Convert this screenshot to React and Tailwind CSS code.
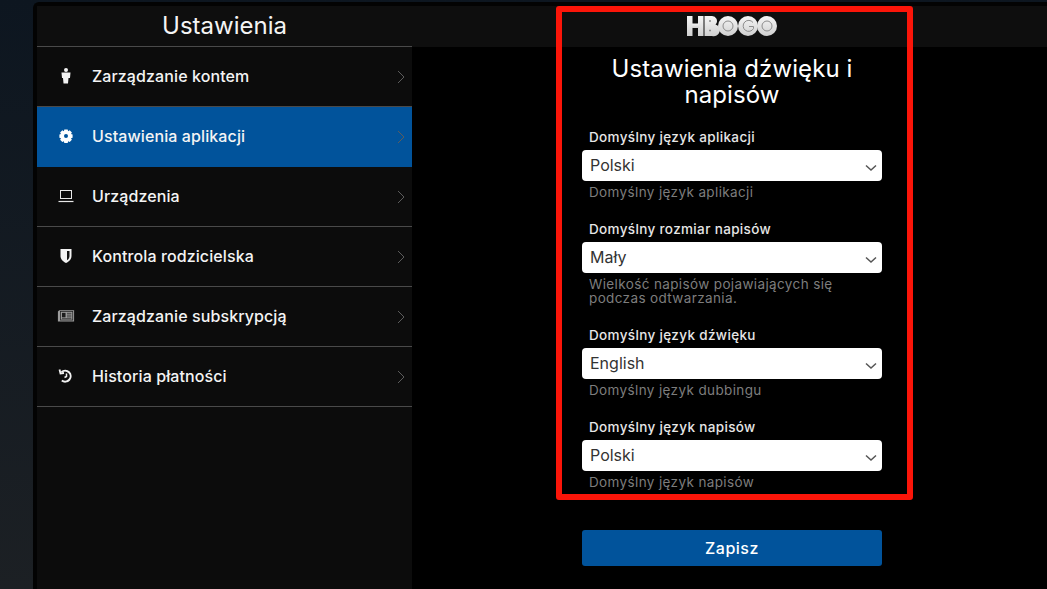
import React from 'react'

const font = { fontFamily: 'Inter, "Liberation Sans", sans-serif' }

const menu = [
  { label: 'Zarządzanie kontem', icon: 'person' },
  { label: 'Ustawienia aplikacji', icon: 'gear', active: true },
  { label: 'Urządzenia', icon: 'laptop' },
  { label: 'Kontrola rodzicielska', icon: 'shield' },
  { label: 'Zarządzanie subskrypcją', icon: 'card' },
  { label: 'Historia płatności', icon: 'history' },
]

const fields = [
  { label: 'Domyślny język aplikacji', value: 'Polski', hint: ['Domyślny język aplikacji'] },
  { label: 'Domyślny rozmiar napisów', value: 'Mały', hint: ['Wielkość napisów pojawiających się', 'podczas odtwarzania.'] },
  { label: 'Domyślny język dźwięku', value: 'English', hint: ['Domyślny język dubbingu'] },
  { label: 'Domyślny język napisów', value: 'Polski', hint: ['Domyślny język napisów'] },
]

function MenuIcon({ name }) {
  if (name === 'person') {
    return (
      <svg width="18" height="18" viewBox="0 0 18 18" fill="#f2f2f2">
        <circle cx="9" cy="3" r="2" />
        <path d="M4.500 5.500h9l-.5 5.500h-1.500l-.5 5.500H6.500L6 11H5z" />
      </svg>
    )
  }
  if (name === 'gear') {
    return (
      <svg width="18" height="18" viewBox="0 0 18 18" fill="#fff">
        <path fillRule="evenodd" d="M7.300 2.500h3.400l.4 1.700 1.600-.9 2.200 2.300-.9 1.500 1.600.5v3.200l-1.600.5.900 1.500-2.200 2.300-1.600-.9-.4 1.700H7.300l-.4-1.700-1.600.9-2.200-2.300.9-1.500-1.600-.5V7.600l1.600-.5-.9-1.500 2.200-2.300 1.600.9zM9 7a2 2 0 1 0 0 4 2 2 0 0 0 0-4z" />
      </svg>
    )
  }
  if (name === 'laptop') {
    return (
      <svg width="18" height="18" viewBox="0 0 18 18" fill="none" stroke="#e8e8e8" strokeWidth="1">
        <rect x="3.500" y="3.500" width="11" height="8" />
        <path d="M1.500 14.500h15" strokeWidth="1.200" />
      </svg>
    )
  }
  if (name === 'shield') {
    return (
      <svg width="18" height="18" viewBox="0 0 18 18">
        <path d="M3.500 2h11v7c0 3.500-2.500 5.500-5.500 7-3-1.500-5.500-3.500-5.500-7z" fill="#f2f2f2" />
        <path d="M10 4h2.500v5c0 2-1 3.200-2.500 4.200z" fill="#111" />
      </svg>
    )
  }
  if (name === 'card') {
    return (
      <svg width="20" height="18" viewBox="0 0 20 18">
        <path d="M2.500 2.500h16.500v12.500H1V4z" fill="#9c9c9c" />
        <rect x="4" y="4" width="13.500" height="9.500" fill="none" stroke="#1c1c1c" strokeWidth="0.8" />
        <rect x="5.500" y="5.500" width="4" height="5" fill="#1c1c1c" />
        <path d="M11 6h5M11 8h5M11 10h5M5.500 12h10.500" stroke="#1c1c1c" strokeWidth="0.8" />
      </svg>
    )
  }
  return (
    <svg width="18" height="18" viewBox="0 0 18 18" fill="none" stroke="#f2f2f2" strokeWidth="2">
      <path d="M4.500 5A5.500 5.500 0 1 1 4.800 13.500" />
      <path d="M2.500 2.500l1 4 3.500-.5" strokeWidth="1.800" />
      <path d="M9.500 6.500v3l-2 1" strokeWidth="1.500" />
    </svg>
  )
}

function HboLogo() {
  return (
    <svg width="92" height="22" viewBox="0 0 92 22">
      <defs>
        <linearGradient id="hbo" x1="0" y1="0" x2="0" y2="1">
          <stop offset="0" stopColor="#f6f6f6" />
          <stop offset="1" stopColor="#cfcfcf" />
        </linearGradient>
      </defs>
      <g fill="url(#hbo)">
        <rect x="1" y="1" width="5.500" height="20" />
        <rect x="12" y="1" width="5.500" height="20" />
        <rect x="6" y="8.500" width="7" height="4.500" />
        <path d="M18.500 1h7a5 5 0 0 1 4 8.500 5.500 5.500 0 0 1-3.500 11.500h-7.500z" />
        <circle cx="42" cy="11" r="10" />
        <circle cx="62" cy="11" r="10" />
        <circle cx="81" cy="11" r="10" />
      </g>
      <g fill="none" stroke="#8c8c8c" strokeWidth="1">
        <circle cx="42" cy="11" r="5" />
        <circle cx="81" cy="11" r="5" />
        <path d="M67 7.500A5.500 5.500 0 1 0 67.500 13.500V11.500H63" />
      </g>
      <path d="M23 6h2M23 15.500h2" stroke="#8c8c8c" strokeWidth="1.500" />
    </svg>
  )
}

function Chevron() {
  return (
    <svg className="mt-[1px]" width="8" height="14" viewBox="0 0 8 14" fill="none" stroke="#5c5c5c" strokeWidth="1">
      <path d="M1 1l6 6-6 6" />
    </svg>
  )
}

function MenuRow({ item }) {
  return (
    <div className={`flex h-[60px] items-center border-b pb-[1px] pl-[20px] pr-[7px] ${item.active ? 'border-transparent bg-[#01539b]' : 'border-[#4a4a4a]'}`}>
      <div className="flex w-[18px] justify-center">
        <MenuIcon name={item.icon} />
      </div>
      <span className="ml-[17px] flex-1 pb-[1px] text-[16px] font-medium tracking-[0.1px] text-[#f4f4f4]">{item.label}</span>
      <Chevron />
    </div>
  )
}

function Field({ field }) {
  return (
    <div>
      <div className="pl-[7px] text-[13.500px] leading-[16px] font-medium tracking-[0.35px] text-[#e6e6e6]">{field.label}</div>
      <div className="mt-[5px] flex h-[31px] items-center justify-between rounded-[4px] bg-white pl-[8px] pr-[5px]">
        <span className="pb-[2px] text-[16px] text-[#333]">{field.value}</span>
        <svg className="mt-[5px]" width="12" height="8" viewBox="0 0 12 8" fill="none" stroke="#555" strokeWidth="1.500">
          <path d="M1 1.500l5 4.500 5-4.500" />
        </svg>
      </div>
      <div className="mt-[4px] pl-[7px] text-[13.500px] leading-[14px] tracking-[0.37px] text-[#7d7d7d]">
        {field.hint.map((line) => (
          <div key={line}>{line}</div>
        ))}
      </div>
    </div>
  )
}

export default function App() {
  return (
    <div style={font} className="relative flex h-[589px] w-[1047px] overflow-hidden bg-gradient-to-b from-[#0d1620] to-[#1c2024]">
      <div className="w-[33px] shrink-0" />
      <div className="mt-[2px] flex min-w-0 flex-1 flex-col rounded-tl-[6px] border-l-[4px] border-t-[4px] border-[#030303] bg-black">
        <div className="flex h-[41px] shrink-0 bg-[#0e0e0e]">
          <div className="flex w-[375px] items-center justify-center border-b border-[#4a4a4a]">
            <span className="text-[24px] text-[#f4f4f4]">Ustawienia</span>
          </div>
          <div className="flex flex-1 items-start pl-[274px] pt-[9px]">
            <HboLogo />
          </div>
        </div>
        <div className="flex min-h-0 flex-1">
          <div className="w-[375px] shrink-0 bg-[#0c0c0c]">
            {menu.map((item) => (
              <MenuRow key={item.label} item={item} />
            ))}
          </div>
          <div className="flex-1 pl-[170px]">
            <div className="w-[300px]">
              <h1 className="mt-[9px] text-center text-[24px] leading-[26px] tracking-[0.1px] text-white">
                Ustawienia dźwięku i
                <br />
                napisów
              </h1>
              <div className="mt-[21px] flex flex-col gap-[22px]">
                {fields.map((f) => (
                  <Field key={f.label} field={f} />
                ))}
              </div>
              <button className="mt-[41px] h-[36px] w-full rounded-[3px] bg-[#01539b] text-[16px] font-medium tracking-[0.5px] text-white">Zapisz</button>
            </div>
          </div>
        </div>
      </div>
      <div className="pointer-events-none absolute left-[556px] top-[6px] h-[494px] w-[357px] rounded-[3px] border-[6px] border-[#fb1509]" />
    </div>
  )
}
